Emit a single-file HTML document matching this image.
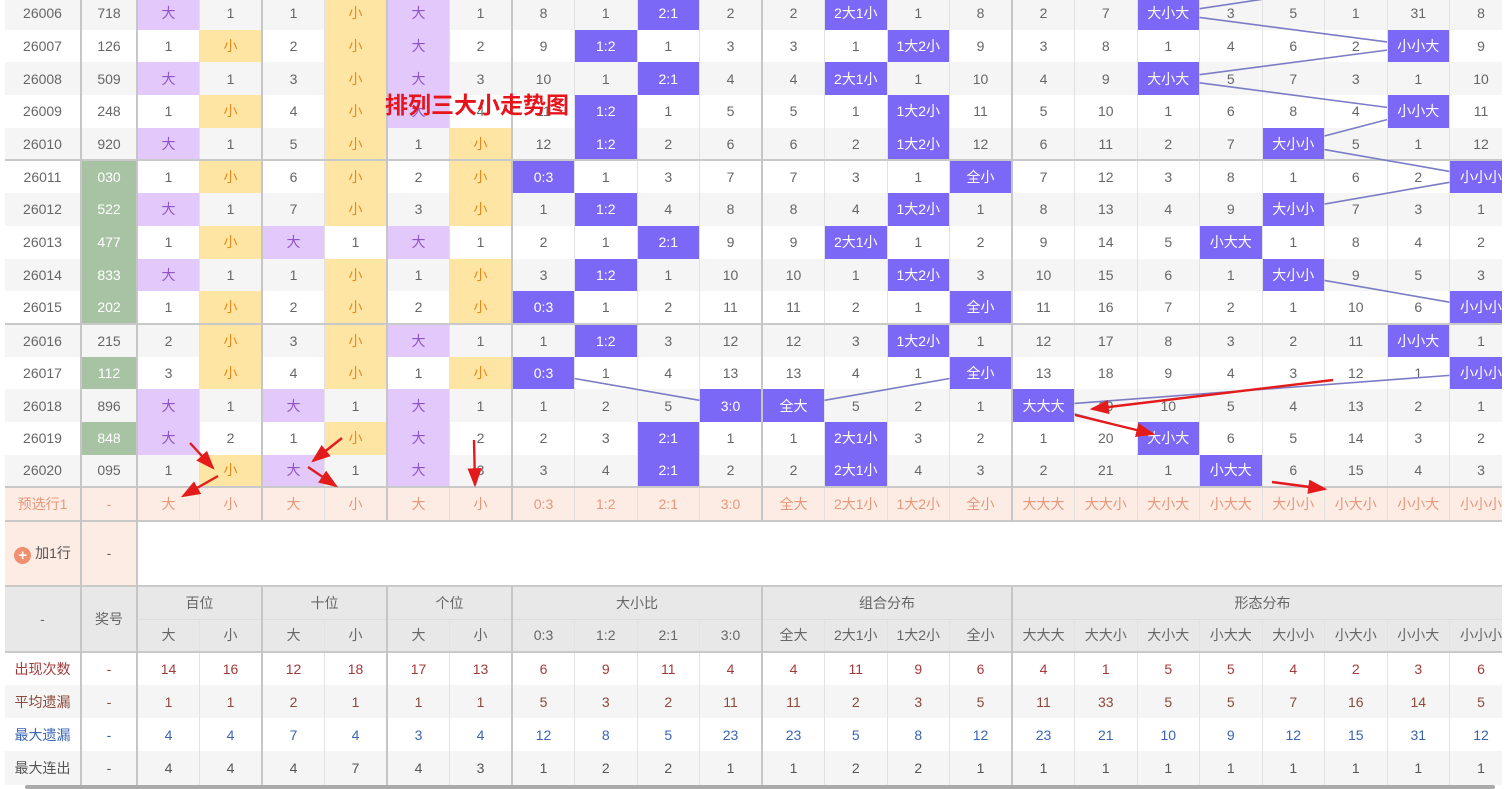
<!DOCTYPE html>
<html><head><meta charset="utf-8">
<style>
*{margin:0;padding:0;box-sizing:border-box}
body{width:1505px;height:788px;overflow:hidden;background:#fff;font-family:"Liberation Sans","Noto Sans CJK SC",sans-serif;position:relative}
#wrap{position:absolute;left:5px;top:-3px;width:1497px;height:789px;overflow:hidden}
table{border-collapse:collapse;table-layout:fixed;width:1507px;font-size:14px;color:#666}
td{text-align:center;padding:0;border-left:1px solid #e2e2e2;white-space:nowrap;overflow:hidden}
tr{height:32.7px}
tr.e{background:#f5f5f5}
td.L{border-left:2px solid #c6c6c6}
td.c1{border-left:none}
td.d{background:#e2c8fb;color:#9052c9}
td.x{background:#ffe5a3;color:#e7891b}
td.b{background:#7b68f7;color:#fff}
td.g{background:#a8c3a3;color:#fff}
tr.T td{border-top:2px solid #c9c9c9}
tr.p{background:#fdece4;color:#e8967a;height:33.5px}
tr.p td{border-top:2px solid #c9c9c9}
tr.add td{border-top:2px solid #c9c9c9}
tr.h{background:#e8e8e8;color:#666;height:33.2px}
tr.h1 td{border-top:2px solid #c9c9c9}
tr.h2 td{border-top:1px solid #dcdcdc}
tr.s1,tr.s2,tr.s3,tr.s4{height:33.1px}
tr.s1{color:#a33a3a}
tr.s2{background:#f5f5f5;color:#8b4a3a}
tr.s3{color:#3a64b4}
tr.s4{background:#f5f5f5;color:#555}
#svg{position:absolute;left:0;top:0;width:1505px;height:788px;pointer-events:none}
.title{position:absolute;left:385px;top:86px;font-size:23px;font-weight:bold;color:#e8141b;font-family:"Liberation Sans","Noto Sans CJK SC",sans-serif}
.plus{display:inline-block;width:17px;height:17px;border-radius:50%;background:#f0906e;color:#fff;font-size:15px;line-height:17px;vertical-align:-2px;margin-right:4px;font-weight:bold}
.sb{position:absolute;left:25px;top:785px;width:1470px;height:4px;background:#aaa;border-radius:2px}
</style></head><body>
<div id="wrap">
<table>
<colgroup><col style="width:76px"><col style="width:56px"><col span="22" style="width:62.5px"></colgroup>
<tr class="e"><td class="c1">26006</td><td class="L">718</td><td class="L d">大</td><td>1</td><td class="L">1</td><td class="x">小</td><td class="L d">大</td><td>1</td><td class="L">8</td><td>1</td><td class="b">2:1</td><td>2</td><td class="L">2</td><td class="b">2大1小</td><td>1</td><td>8</td><td class="L">2</td><td>7</td><td class="b">大小大</td><td>3</td><td>5</td><td>1</td><td>31</td><td>8</td></tr>
<tr><td class="c1">26007</td><td class="L">126</td><td class="L">1</td><td class="x">小</td><td class="L">2</td><td class="x">小</td><td class="L d">大</td><td>2</td><td class="L">9</td><td class="b">1:2</td><td>1</td><td>3</td><td class="L">3</td><td>1</td><td class="b">1大2小</td><td>9</td><td class="L">3</td><td>8</td><td>1</td><td>4</td><td>6</td><td>2</td><td class="b">小小大</td><td>9</td></tr>
<tr class="e"><td class="c1">26008</td><td class="L">509</td><td class="L d">大</td><td>1</td><td class="L">3</td><td class="x">小</td><td class="L d">大</td><td>3</td><td class="L">10</td><td>1</td><td class="b">2:1</td><td>4</td><td class="L">4</td><td class="b">2大1小</td><td>1</td><td>10</td><td class="L">4</td><td>9</td><td class="b">大小大</td><td>5</td><td>7</td><td>3</td><td>1</td><td>10</td></tr>
<tr><td class="c1">26009</td><td class="L">248</td><td class="L">1</td><td class="x">小</td><td class="L">4</td><td class="x">小</td><td class="L d">大</td><td>4</td><td class="L">11</td><td class="b">1:2</td><td>1</td><td>5</td><td class="L">5</td><td>1</td><td class="b">1大2小</td><td>11</td><td class="L">5</td><td>10</td><td>1</td><td>6</td><td>8</td><td>4</td><td class="b">小小大</td><td>11</td></tr>
<tr class="e"><td class="c1">26010</td><td class="L">920</td><td class="L d">大</td><td>1</td><td class="L">5</td><td class="x">小</td><td class="L">1</td><td class="x">小</td><td class="L">12</td><td class="b">1:2</td><td>2</td><td>6</td><td class="L">6</td><td>2</td><td class="b">1大2小</td><td>12</td><td class="L">6</td><td>11</td><td>2</td><td>7</td><td class="b">大小小</td><td>5</td><td>1</td><td>12</td></tr>
<tr class="T"><td class="c1">26011</td><td class="L g">030</td><td class="L">1</td><td class="x">小</td><td class="L">6</td><td class="x">小</td><td class="L">2</td><td class="x">小</td><td class="L b">0:3</td><td>1</td><td>3</td><td>7</td><td class="L">7</td><td>3</td><td>1</td><td class="b">全小</td><td class="L">7</td><td>12</td><td>3</td><td>8</td><td>1</td><td>6</td><td>2</td><td class="b">小小小</td></tr>
<tr class="e"><td class="c1">26012</td><td class="L g">522</td><td class="L d">大</td><td>1</td><td class="L">7</td><td class="x">小</td><td class="L">3</td><td class="x">小</td><td class="L">1</td><td class="b">1:2</td><td>4</td><td>8</td><td class="L">8</td><td>4</td><td class="b">1大2小</td><td>1</td><td class="L">8</td><td>13</td><td>4</td><td>9</td><td class="b">大小小</td><td>7</td><td>3</td><td>1</td></tr>
<tr><td class="c1">26013</td><td class="L g">477</td><td class="L">1</td><td class="x">小</td><td class="L d">大</td><td>1</td><td class="L d">大</td><td>1</td><td class="L">2</td><td>1</td><td class="b">2:1</td><td>9</td><td class="L">9</td><td class="b">2大1小</td><td>1</td><td>2</td><td class="L">9</td><td>14</td><td>5</td><td class="b">小大大</td><td>1</td><td>8</td><td>4</td><td>2</td></tr>
<tr class="e"><td class="c1">26014</td><td class="L g">833</td><td class="L d">大</td><td>1</td><td class="L">1</td><td class="x">小</td><td class="L">1</td><td class="x">小</td><td class="L">3</td><td class="b">1:2</td><td>1</td><td>10</td><td class="L">10</td><td>1</td><td class="b">1大2小</td><td>3</td><td class="L">10</td><td>15</td><td>6</td><td>1</td><td class="b">大小小</td><td>9</td><td>5</td><td>3</td></tr>
<tr><td class="c1">26015</td><td class="L g">202</td><td class="L">1</td><td class="x">小</td><td class="L">2</td><td class="x">小</td><td class="L">2</td><td class="x">小</td><td class="L b">0:3</td><td>1</td><td>2</td><td>11</td><td class="L">11</td><td>2</td><td>1</td><td class="b">全小</td><td class="L">11</td><td>16</td><td>7</td><td>2</td><td>1</td><td>10</td><td>6</td><td class="b">小小小</td></tr>
<tr class="e T"><td class="c1">26016</td><td class="L">215</td><td class="L">2</td><td class="x">小</td><td class="L">3</td><td class="x">小</td><td class="L d">大</td><td>1</td><td class="L">1</td><td class="b">1:2</td><td>3</td><td>12</td><td class="L">12</td><td>3</td><td class="b">1大2小</td><td>1</td><td class="L">12</td><td>17</td><td>8</td><td>3</td><td>2</td><td>11</td><td class="b">小小大</td><td>1</td></tr>
<tr><td class="c1">26017</td><td class="L g">112</td><td class="L">3</td><td class="x">小</td><td class="L">4</td><td class="x">小</td><td class="L">1</td><td class="x">小</td><td class="L b">0:3</td><td>1</td><td>4</td><td>13</td><td class="L">13</td><td>4</td><td>1</td><td class="b">全小</td><td class="L">13</td><td>18</td><td>9</td><td>4</td><td>3</td><td>12</td><td>1</td><td class="b">小小小</td></tr>
<tr class="e"><td class="c1">26018</td><td class="L">896</td><td class="L d">大</td><td>1</td><td class="L d">大</td><td>1</td><td class="L d">大</td><td>1</td><td class="L">1</td><td>2</td><td>5</td><td class="b">3:0</td><td class="L b">全大</td><td>5</td><td>2</td><td>1</td><td class="L b">大大大</td><td>19</td><td>10</td><td>5</td><td>4</td><td>13</td><td>2</td><td>1</td></tr>
<tr><td class="c1">26019</td><td class="L g">848</td><td class="L d">大</td><td>2</td><td class="L">1</td><td class="x">小</td><td class="L d">大</td><td>2</td><td class="L">2</td><td>3</td><td class="b">2:1</td><td>1</td><td class="L">1</td><td class="b">2大1小</td><td>3</td><td>2</td><td class="L">1</td><td>20</td><td class="b">大小大</td><td>6</td><td>5</td><td>14</td><td>3</td><td>2</td></tr>
<tr class="e"><td class="c1">26020</td><td class="L">095</td><td class="L">1</td><td class="x">小</td><td class="L d">大</td><td>1</td><td class="L d">大</td><td>3</td><td class="L">3</td><td>4</td><td class="b">2:1</td><td>2</td><td class="L">2</td><td class="b">2大1小</td><td>4</td><td>3</td><td class="L">2</td><td>21</td><td>1</td><td class="b">小大大</td><td>6</td><td>15</td><td>4</td><td>3</td></tr>
<tr class="p"><td class="c1">预选行1</td><td class="L">-</td><td class="L">大</td><td>小</td><td class="L">大</td><td>小</td><td class="L">大</td><td>小</td><td class="L">0:3</td><td>1:2</td><td>2:1</td><td>3:0</td><td class="L">全大</td><td>2大1小</td><td>1大2小</td><td>全小</td><td class="L">大大大</td><td>大大小</td><td>大小大</td><td>小大大</td><td>大小小</td><td>小大小</td><td>小小大</td><td>小小小</td></tr>
<tr class="add" style="height:65px"><td class="c1" style="background:#fdece4;color:#555"><span class="plus">+</span>加1行</td><td class="L" style="background:#fdece4">-</td><td class="L" colspan="22" style="background:#fff"></td></tr>
<tr class="h h1"><td class="c1" rowspan="2">-</td><td class="L" rowspan="2">奖号</td><td class="L" colspan="2">百位</td><td class="L" colspan="2">十位</td><td class="L" colspan="2">个位</td><td class="L" colspan="4">大小比</td><td class="L" colspan="4">组合分布</td><td class="L" colspan="8">形态分布</td></tr>
<tr class="h h2"><td class="L">大</td><td>小</td><td class="L">大</td><td>小</td><td class="L">大</td><td>小</td><td class="L">0:3</td><td>1:2</td><td>2:1</td><td>3:0</td><td class="L">全大</td><td>2大1小</td><td>1大2小</td><td>全小</td><td class="L">大大大</td><td>大大小</td><td>大小大</td><td>小大大</td><td>大小小</td><td>小大小</td><td>小小大</td><td>小小小</td></tr>
<tr class="s1" style="border-top:2px solid #c9c9c9"><td class="c1">出现次数</td><td class="L">-</td><td class="L">14</td><td>16</td><td class="L">12</td><td>18</td><td class="L">17</td><td>13</td><td class="L">6</td><td>9</td><td>11</td><td>4</td><td class="L">4</td><td>11</td><td>9</td><td>6</td><td class="L">4</td><td>1</td><td>5</td><td>5</td><td>4</td><td>2</td><td>3</td><td>6</td></tr>
<tr class="s2"><td class="c1">平均遗漏</td><td class="L">-</td><td class="L">1</td><td>1</td><td class="L">2</td><td>1</td><td class="L">1</td><td>1</td><td class="L">5</td><td>3</td><td>2</td><td>11</td><td class="L">11</td><td>2</td><td>3</td><td>5</td><td class="L">11</td><td>33</td><td>5</td><td>5</td><td>7</td><td>16</td><td>14</td><td>5</td></tr>
<tr class="s3"><td class="c1">最大遗漏</td><td class="L">-</td><td class="L">4</td><td>4</td><td class="L">7</td><td>4</td><td class="L">3</td><td>4</td><td class="L">12</td><td>8</td><td>5</td><td>23</td><td class="L">23</td><td>5</td><td>8</td><td>12</td><td class="L">23</td><td>21</td><td>10</td><td>9</td><td>12</td><td>15</td><td>31</td><td>12</td></tr>
<tr class="s4"><td class="c1">最大连出</td><td class="L">-</td><td class="L">4</td><td>4</td><td class="L">4</td><td>7</td><td class="L">4</td><td>3</td><td class="L">1</td><td>2</td><td>2</td><td>1</td><td class="L">1</td><td>2</td><td>2</td><td>1</td><td class="L">1</td><td>1</td><td>1</td><td>1</td><td>1</td><td>1</td><td>1</td><td>1</td></tr>
</table>
</div>
<svg id="svg" viewBox="0 0 1505 788">
<defs><marker id="ah" markerWidth="8" markerHeight="6" refX="7" refY="3" orient="auto" markerUnits="strokeWidth"><path d="M0,0 L8,3 L0,6 Z" fill="#e41b1b"/></marker></defs>
<g id="ln" stroke="#7c7cc6" stroke-width="1.6" fill="none"></g>
<g stroke="#e41b1b" stroke-width="2.4" fill="none" marker-end="url(#ah)">
<line x1="190" y1="443" x2="213" y2="468"/>
<line x1="218" y1="476" x2="183" y2="496"/>
<line x1="342" y1="438" x2="313" y2="461"/>
<line x1="308" y1="467" x2="336" y2="486"/>
<line x1="474" y1="440" x2="475" y2="485"/>
<line x1="1333" y1="380" x2="1092" y2="409"/>
<line x1="1075" y1="415" x2="1153" y2="434"/>
<line x1="1272" y1="482" x2="1325" y2="489"/>
</g>
</svg>
<div class="title">排列三大小走势图</div>
<div class="sb"></div>
<script>
(function(){
var g=document.getElementById('ln');
function cx(k){return 137+62.5*k+31.25;}
function cy(r){return -3+32.7*r+16.35;}
var groups=[
 [8,7,8,7,7,6,7,8,7,6,7,6,9,8,8],
 [11,12,11,12,12,13,12,11,12,13,12,13,10,11,11],
 [16,20,16,20,18,21,18,17,18,21,20,21,14,16,17]
];
var s='';
groups.forEach(function(a,gi){
 var pts=a.map(function(k,r){return [cx(k),cy(r)];});
 if(gi==2)pts.unshift([cx(19.5),cy(-1)]);
 for(var i=0;i<pts.length-1;i++){
  var x1=pts[i][0],y1=pts[i][1],x2=pts[i+1][0],y2=pts[i+1][1];
  var dx=x2-x1,dy=y2-y1;
  if(Math.abs(dx)<1)continue;
  var t=Math.min(31.25/Math.abs(dx),16.35/Math.abs(dy));
  var ax=x1+dx*t,ay=y1+dy*t,bx=x2-dx*t,by=y2-dy*t;
  s+='<line x1="'+ax+'" y1="'+ay+'" x2="'+bx+'" y2="'+by+'"/>';
 }
});
g.innerHTML=s;
})();
</script>
</body></html>
